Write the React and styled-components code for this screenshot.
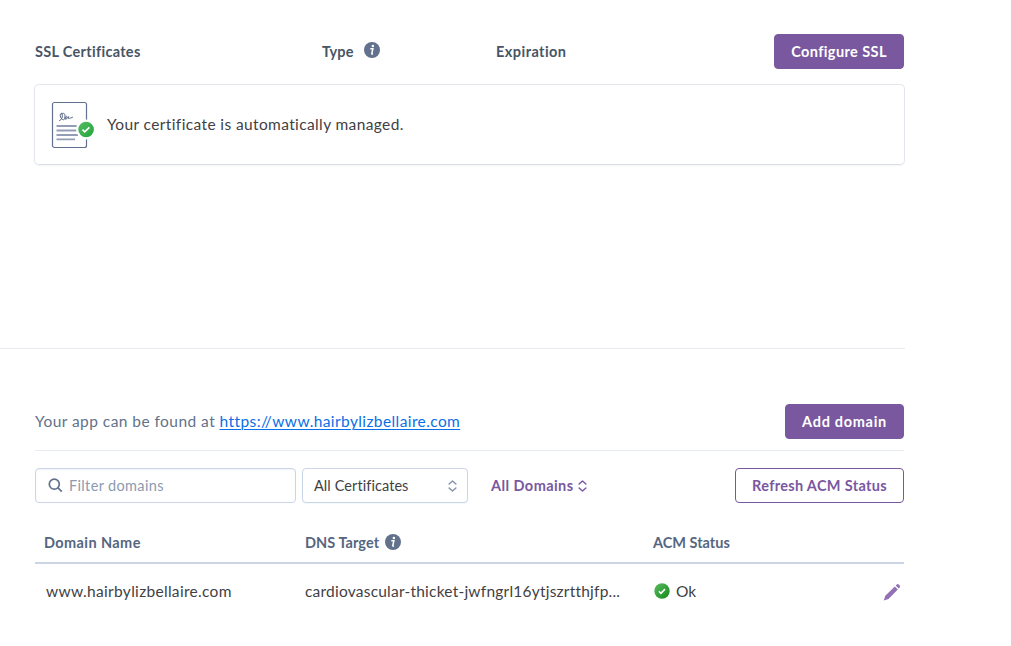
import React from "react";
import styled, { createGlobalStyle } from "styled-components";

const Global = createGlobalStyle`
  * { box-sizing: border-box; }
  body { margin: 0; background: #fff; color: #3f3f44; font-family: Lato, sans-serif; font-size: 15.5px; font-variant-ligatures: none; }
`;

const Page = styled.main`
  width: 905px;
  height: 646px;
  overflow: hidden;
`;

const SslSection = styled.section`
  height: 349px;
  padding: 34px 0 0 34px;
  border-bottom: 1px solid #e9eaef;
`;

const Heading = styled.span`
  display: inline-flex;
  align-items: center;
  color: ${(p) => p.$color || "#475566"};
  font: 700 14.5px/20px Lato, sans-serif;
  letter-spacing: ${(p) => p.$spacing || "0.1px"};
  white-space: nowrap;
  svg { margin: -3px 0 0 ${(p) => p.$iconGap || "10px"}; }
`;

const SslHeader = styled.header`
  display: grid;
  grid-template-columns: 287px 174px 1fr auto;
  align-items: center;
  height: 35px;
  padding: 0 1px;
`;

const Button = styled.button`
  width: ${(p) => p.$width}px;
  height: 35px;
  padding: 1px 0 0;
  border: 1px solid #79589f;
  border-radius: 4px;
  background: ${(p) => (p.$outline ? "#fff" : "#79589f")};
  color: ${(p) => (p.$outline ? "#79589f" : "#fff")};
  font: 700 14.5px/20px Lato, sans-serif;
  letter-spacing: ${(p) => p.$spacing || "0.4px"};
  white-space: nowrap;
`;

const Card = styled.div`
  display: flex;
  align-items: center;
  height: 81px;
  margin-top: 15px;
  padding-left: 16px;
  border: 1px solid #e4e6ec;
  border-bottom-color: #dbe0e8;
  border-radius: 5px;
  box-shadow: 0 1px 2px rgba(60, 70, 90, 0.06);
`;

const CardText = styled.p`
  margin: 0 0 1px 12px;
  line-height: 20px;
  letter-spacing: 0.38px;
`;

const DomainSection = styled.section`
  padding: 55px 1px 0 35px;
`;

const AppBar = styled.div`
  display: flex;
  align-items: center;
  justify-content: space-between;
  height: 47px;
  padding-bottom: 12px;
  border-bottom: 1px solid #e7ebf2;
`;

const Found = styled.p`
  margin: 0;
  color: #62728a;
  line-height: 20px;
  letter-spacing: 0.45px;
`;

const Link = styled.a`
  color: #0b6fe8;
  letter-spacing: 0.4px;
  text-decoration: underline;
  text-underline-offset: 2px;
  text-decoration-thickness: 1px;
`;

const Toolbar = styled.div`
  display: flex;
  align-items: center;
  height: 35px;
  margin-top: 17px;
`;

const Search = styled.label`
  display: flex;
  align-items: center;
  width: 261px;
  height: 35px;
  padding: 0 0 0 12px;
  gap: 6px;
  border: 1px solid #cbd5e8;
  border-radius: 4px;
  box-shadow: inset 0 1px 2px rgba(80, 100, 140, 0.08);
`;

const SearchInput = styled.input`
  width: 200px;
  height: 20px;
  padding: 0;
  border: 0;
  outline: 0;
  background: transparent;
  font: 14.5px/20px Lato, sans-serif;
  letter-spacing: 0.35px;
  &::placeholder { color: #8c9ab0; opacity: 1; }
`;

const Select = styled.button`
  display: flex;
  align-items: center;
  justify-content: space-between;
  width: 166px;
  height: 35px;
  margin-left: 6px;
  padding: 1px 10px 0 11px;
  border: 1px solid #cbd5e8;
  border-radius: 4px;
  background: #fff;
  color: #3f3f44;
  font: 14.5px/20px Lato, sans-serif;
  letter-spacing: 0.08px;
  box-shadow: 0 1px 1px rgba(80, 100, 140, 0.06);
  svg { margin-top: -1px; }
`;

const DomainMenu = styled.button`
  display: flex;
  align-items: center;
  gap: 4px;
  margin: 1px auto 0 23px;
  padding: 0;
  border: 0;
  background: none;
  color: #79589f;
  font: 700 14.5px/20px Lato, sans-serif;
  letter-spacing: 0.43px;
  svg { margin-top: -1px; }
`;

const TableRow = styled.div`
  display: grid;
  align-items: center;
`;

const TableHead = styled(TableRow)`
  height: 46px;
  margin-top: 15px;
  padding: 6px 0 0 9px;
  grid-template-columns: 261px 348px 1fr;
  border-bottom: 2px solid #ccd5e5;
`;

const DomainRow = styled(TableRow)`
  height: 56px;
  padding: 0 3px 0 11px;
  grid-template-columns: 259px 348px 1fr auto;
`;

const Cell = styled.span`
  margin-top: -2px;
  line-height: 20px;
  letter-spacing: ${(p) => p.$spacing};
  white-space: nowrap;
`;

const Status = styled.span`
  display: flex;
  align-items: center;
  gap: 6px;
  padding-left: 1px;
  line-height: 20px;
  margin-top: -2px;
`;

function InfoIcon() {
  return (
    <svg width="16" height="16" viewBox="0 0 16 16">
      <circle cx="8" cy="8" r="8" fill="#62718c" />
      <circle cx="8.9" cy="4.1" r="1.25" fill="#fff" />
      <path d="M6.3 6.7h2.6L7.8 11.5q-.2.9 1.2.5" fill="none" stroke="#fff" strokeWidth="1.5" />
    </svg>
  );
}

function Sorter({ color }) {
  return (
    <svg width="9" height="12" viewBox="0 0 9 12" fill="none" stroke={color} strokeWidth="1.4" strokeLinejoin="round" strokeLinecap="round">
      <path d="M1.1 4.1 4.5.9l3.4 3.2M1.1 7.9l3.4 3.2 3.4-3.2" />
    </svg>
  );
}

function CheckIcon() {
  return (
    <svg width="16" height="16" viewBox="0 0 16 16">
      <defs>
        <linearGradient id="ok" x1="0" y1="0" x2="1" y2="1">
          <stop stopColor="#5dbb62" />
          <stop offset="1" stopColor="#128a18" />
        </linearGradient>
      </defs>
      <circle cx="8" cy="8" r="7.7" fill="url(#ok)" />
      <path d="m4.9 8.3 2 2 4.1-4.2" fill="none" stroke="#fff" strokeWidth="1.6" />
    </svg>
  );
}

function CertificateIcon() {
  return (
    <svg width="44" height="48" viewBox="0 0 44 48" fill="none">
      <defs>
        <linearGradient id="seal" x1="0" y1="0" x2="1" y2="1">
          <stop stopColor="#55bd64" />
          <stop offset="1" stopColor="#22a53b" />
        </linearGradient>
      </defs>
      <rect x="1.5" y="1.5" width="34" height="45" rx="2" stroke="#62718f" strokeWidth="1.2" />
      <path d="M8.2 19.7c2.7-.6 3.7-4.3 2.9-6.9-.5-1.3-2 .1-1.9 1.7.2 2.4 1.6 3.8 3.3 4.5 1.7-1.4 2.2-6.4.1-6.6-1.6-.2-3 .6-3.4 1.7M14.2 18c1.6-.5 2.4-2.6 1.4-2.7-1.5.1-2.1 2.6-.9 2.7 1.5.1 2.3-1.8 2.9-2.4-.5 1.4-.3 2.5.6 1.9.9-.7 1.2-.4 1.7-.5l2-.9" stroke="#596985" />
      <path d="M5.5 25H26M5.5 29.5H26M5.5 34H27M5.5 38.4H24" stroke="#929eb5" strokeWidth="1.9" />
      <circle cx="35" cy="28.5" r="10" fill="#fff" />
      <circle cx="35.1" cy="28.5" r="7.8" fill="url(#seal)" />
      <path d="m31.5 28.6 2.2 2.2 4.7-4.5" stroke="#fff" strokeWidth="1.7" />
    </svg>
  );
}

function SearchIcon() {
  return (
    <svg width="15" height="15" viewBox="0 0 15 15" fill="none" stroke="#62718c" strokeWidth="1.7">
      <circle cx="6.3" cy="6.2" r="5" />
      <path d="m9.8 9.7 4 4" />
    </svg>
  );
}

function PencilIcon() {
  return (
    <svg width="18" height="18" viewBox="0 0 18 18" fill="#9271b6">
      <path d="m.8 17.5 1.5-4.8 9.5-9.3 3 3-9.3 9.5zM12.7 2.5l1.1-1q1-.8 2.1.1l.8.8q.9 1 0 2l-1 1.1z" />
    </svg>
  );
}

export default function App() {
  return (
    <Page>
      <Global />
      <SslSection>
        <SslHeader>
          <Heading $spacing="0.3px">SSL Certificates</Heading>
          <Heading>Type<InfoIcon /></Heading>
          <Heading $spacing="0.45px">Expiration</Heading>
          <Button $width={130}>Configure SSL</Button>
        </SslHeader>
        <Card>
          <CertificateIcon />
          <CardText>Your certificate is automatically managed.</CardText>
        </Card>
      </SslSection>
      <DomainSection>
        <AppBar>
          <Found>Your app can be found at <Link href="#">https://www.hairbylizbellaire.com</Link></Found>
          <Button $width={119} $spacing="0.7px">Add domain</Button>
        </AppBar>
        <Toolbar>
          <Search>
            <SearchIcon />
            <SearchInput placeholder="Filter domains" />
          </Search>
          <Select>All Certificates<Sorter color="#8492aa" /></Select>
          <DomainMenu>All Domains<Sorter color="#79589f" /></DomainMenu>
          <Button $outline $width={169} $spacing="0.33px">Refresh ACM Status</Button>
        </Toolbar>
        <TableHead>
          <Heading $color="#56667f" $spacing="0.4px">Domain Name</Heading>
          <Heading $color="#56667f" $spacing="0.05px" $iconGap="6px">DNS Target<InfoIcon /></Heading>
          <Heading $color="#56667f" $spacing="0">ACM Status</Heading>
        </TableHead>
        <DomainRow>
          <Cell $spacing="0.31px">www.hairbylizbellaire.com</Cell>
          <Cell $spacing="0.22px">cardiovascular-thicket-jwfngrl16ytjszrtthjfp...</Cell>
          <Status><CheckIcon />Ok</Status>
          <PencilIcon />
        </DomainRow>
      </DomainSection>
    </Page>
  );
}
